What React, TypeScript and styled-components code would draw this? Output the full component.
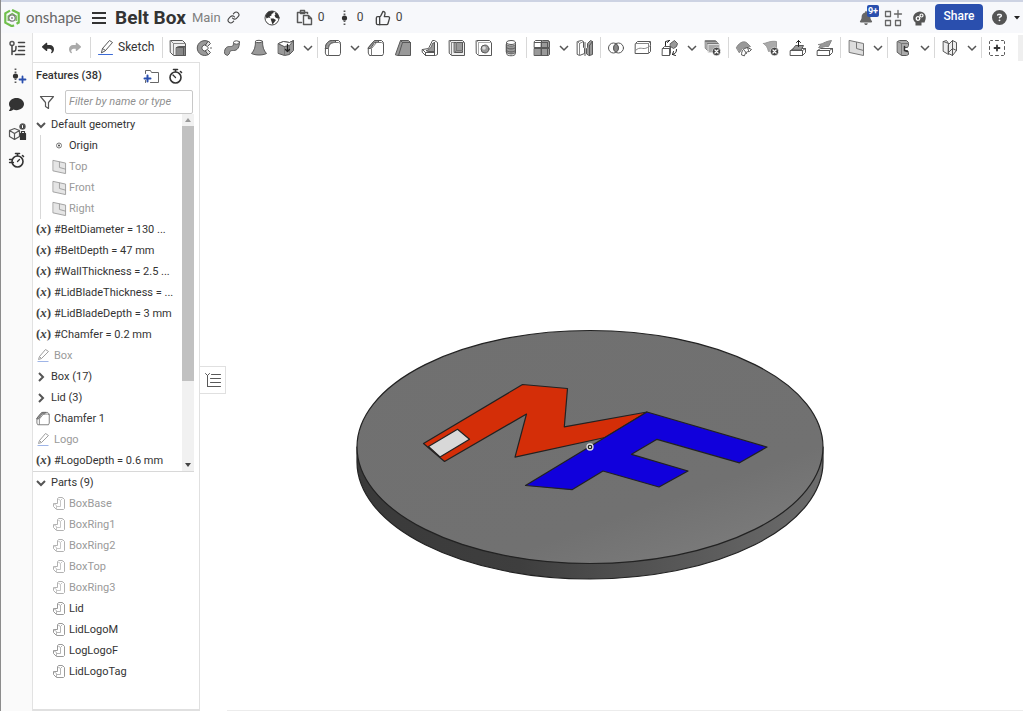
import React from 'react';
import styled, { createGlobalStyle } from 'styled-components';
import { Link, ThumbsUp } from 'lucide-react';
import { FaBell, FaComment, FaCircleQuestion, FaReply, FaShare } from 'react-icons/fa6';

const GlobalStyle = createGlobalStyle`
  * { box-sizing: border-box; }
  html, body, #root { height: 100%; }
  body {
    margin: 0;
    overflow: hidden;
    background: #fff;
    color: #333;
    font-family: Roboto, "Liberation Sans", sans-serif;
    font-size: 11px;
    line-height: 21px;
  }
  button, input { font: inherit; color: inherit; }
  ul { list-style: none; margin: 0; padding: 0; }
  svg { display: block; flex: none; }
`;

const Shell = styled.div`
  height: 100%;
  display: flex;
  flex-direction: column;
  border-left: 1px solid #8c8c8c;
`;

const TopBar = styled.header`
  height: 33px;
  flex: none;
  display: flex;
  align-items: center;
  padding: 0 1px 0 3px;
  background: #f7f8fb;
  border-top: 2px solid #cdd3e3;
  white-space: nowrap;
`;

const Brand = styled.a`
  display: flex;
  align-items: center;
  gap: 6px;
  width: 87px;
  color: #666;
  font-family: Lato, sans-serif;
  font-size: 15px;
  text-decoration: none;
`;

const IconButton = styled.button<{ $w?: number; $color?: string }>`
  width: ${p => p.$w ?? 27}px;
  height: 28px;
  flex: none;
  display: flex;
  align-items: center;
  justify-content: center;
  padding: 0 ${p => (p.$w ? 0 : 1)}px 0 0;
  border: 0;
  background: none;
  color: ${p => p.$color ?? '#444'};
  position: relative;
`;

const DocTitle = styled.h1`
  margin: 0 6px 0 9px;
  font-family: Roboto, sans-serif;
  font-size: 19px;
  font-weight: 700;
  color: #333;
`;

const Workspace = styled.span`
  font-size: 13px;
  color: #808080;
`;

const Stats = styled.div`
  display: flex;
  align-items: center;
  gap: 8px;
  margin-left: 7px;
`;

const StatList = styled.div`
  display: flex;
  align-items: center;
`;

const Stat = styled.button`
  display: flex;
  align-items: center;
  gap: 5px;
  min-width: 39px;
  padding: 0;
  border: 0;
  background: none;
  color: #444;
  font-size: 12px;
`;

const Actions = styled.div`
  display: flex;
  align-items: center;
  margin-left: auto;
`;

const Badge = styled.span`
  position: absolute;
  top: 1px;
  right: 1px;
  padding: 0 1px;
  border-radius: 2px;
  background: #2a4fae;
  color: #fff;
  font-size: 9px;
  font-weight: 700;
  line-height: 12px;
`;

const ShareButton = styled.button`
  width: 48px;
  height: 26px;
  margin: 0 4px 2px 3px;
  padding: 0;
  border: 0;
  border-radius: 4px;
  background: #2a4fae;
  color: #fff;
  font-size: 12px;
  font-weight: 500;
`;

const Body = styled.div`
  flex: 1;
  min-height: 0;
  display: flex;
`;

const Rail = styled.nav`
  width: 32px;
  flex: none;
  display: flex;
  flex-direction: column;
  align-items: center;
  padding-top: 1px;
  background: #fafafa;
  border-right: 1px solid #e2e2e2;
`;

const Main = styled.div`
  flex: 1;
  min-width: 0;
  display: flex;
  flex-direction: column;
`;

const Toolbar = styled.div`
  height: 29px;
  flex: none;
  display: flex;
  align-items: center;
  overflow: hidden;
`;

const Group = styled.div`
  height: 21px;
  display: flex;
  align-items: center;
  flex: none;
  padding: 0 1px 0 2px;
  & + & { border-left: 1px solid #d8d8d8; }
`;

const SketchButton = styled.button`
  width: 68px;
  display: flex;
  align-items: center;
  gap: 4px;
  padding: 0 0 0 5px;
  border: 0;
  background: none;
  font-size: 12px;
`;

const ToolbarEnd = styled.div`
  width: 5px;
  height: 26px;
  flex: none;
  margin-left: auto;
  background: #efefef;
`;

const Work = styled.div`
  flex: 1;
  min-height: 0;
  display: flex;
`;

const Panel = styled.aside`
  width: 167px;
  flex: none;
  display: flex;
  flex-direction: column;
  border: solid #e0e0e0;
  border-width: 1px 1px 2px 0;
`;

const PanelHead = styled.div`
  display: flex;
  align-items: center;
  height: 26px;
  padding: 0 12px 0 3px;
  h2 { margin: 0 auto 0 0; font-size: 11px; line-height: 26px; font-weight: 500; }
`;

const FilterRow = styled.div`
  display: flex;
  align-items: center;
  height: 25px;
  padding: 0 6px 0 1px;
`;

const FilterInput = styled.input`
  flex: 1;
  min-width: 0;
  height: 24px;
  margin-left: 4px;
  padding: 0 3px;
  border: 1px solid #c8c8c8;
  border-radius: 2px;
  &::placeholder { color: #909090; opacity: 1; font-style: italic; }
`;

const FeatureArea = styled.div`
  display: flex;
  flex: none;
  margin-right: 5px;
  border-bottom: 1px solid #d8d8d8;
`;

const FeatureList = styled.ul`
  flex: 1;
  min-width: 0;
`;

const Row = styled.li<{ $muted?: boolean; $deep?: boolean }>`
  height: 21px;
  display: flex;
  align-items: center;
  gap: 3px;
  padding-left: ${p => (p.$deep ? 19 : 3)}px;
  color: ${p => (p.$muted ? '#9a9a9a' : '#333')};
  > svg { opacity: ${p => (p.$muted ? 0.75 : 1)}; }
`;

const RowText = styled.span`
  white-space: nowrap;
`;

const VariableMark = styled.span`
  width: 15px;
  height: 19px;
  flex: none;
  color: #444;
  font-family: "Liberation Serif", serif;
  font-size: 13px;
  font-weight: 700;
  line-height: 17px;
  white-space: nowrap;
`;

const Children = styled.ul`
  margin-left: 7px;
  border-left: 1px solid #d8d8d8;
  li { padding-left: 11px; }
`;

const Toggle = styled.button`
  display: flex;
  align-items: center;
  gap: 5px;
  height: 21px;
  padding: 0 0 0 3px;
  border: 0;
  background: none;
`;

const Scrollbar = styled.div`
  width: 12px;
  flex: none;
  display: flex;
  flex-direction: column;
  align-items: center;
  background: #f1f1f1;
  svg { margin: 4px 0; }
`;

const Thumb = styled.div`
  width: 12px;
  height: 255px;
  background: #c1c1c1;
  & + svg { margin-top: auto; }
`;

const PartsList = styled.ul`
  flex: 1;
`;

const Canvas = styled.main`
  flex: 1;
  min-width: 0;
  position: relative;
  overflow: hidden;
  > svg { width: 100%; height: 100%; }
  &::after {
    content: '';
    position: absolute;
    inset: auto 0 0 27px;
    height: 1px;
    background: #ececec;
  }
`;

const PanelTab = styled.button`
  position: absolute;
  left: -1px;
  top: 304px;
  width: 27px;
  height: 28px;
  display: grid;
  place-items: center;
  padding: 0;
  border: 1px solid #e0e0e0;
  border-left-color: #fff;
  background: #fff;
`;

/* ---------- drawings ---------- */

const Art = styled.svg`
  overflow: visible;
`;

const S = ({ children, size = 16, sw = 1 }: { children: React.ReactNode; size?: number; sw?: number }) => (
  <Art width={size} height={size} viewBox="-0.5 -0.5 16 16" fill="none" stroke="#585858" strokeWidth={sw} strokeLinejoin="round" strokeLinecap="round">
    {children}
  </Art>
);
const G = '#999';

const Chevron = ({ right, bold }: { right?: boolean; bold?: boolean }) => (
  <svg width="10" height="10" viewBox="0 0 10 10" fill="none" stroke="#555" strokeWidth={bold ? 2 : 1.5}>
    <path d={right ? 'M3 1l4 4-4 4' : 'M1 3l4 4 4-4'} />
  </svg>
);

const Pencil = () => (
  <S>
    <path d="M3 12l1-4 7-8 3 2-7 8zM4 8l3 2" />
    <path d="M0 14h14" stroke="#3c6bd6" />
  </S>
);
const PencilRow = () => (
  <Art width="15" height="14" viewBox="-0.5 -0.5 15 14" fill="none" stroke="#808080" strokeLinejoin="round">
    <path d="M2 10l1-3 6-7 3 2-7 7zM3 7l2 2" />
    <path d="M1 12h11" stroke="#7f9de0" />
  </Art>
);

const ChamferShape = () => (
  <>
    <path d="M0 7l5-6 2-1h6l2 2v11l-1 2H1l-1-2z" fill="#fff" />
    <path d="M0 7l6-7h5L9 2H6L2 8H0z" fill={G} />
    <path d="M3 15V8l5-6h5l2 1" stroke="#777" />
  </>
);
const Chamfer = ({ small }: { small?: boolean }) => (
  small
    ? <Art width="15" height="14" viewBox="-0.5 -0.5 17 17" fill="none" stroke="#666" strokeLinejoin="round"><ChamferShape /></Art>
    : <S><ChamferShape /></S>
);

const solidTools: React.ReactNode[] = [
  <S><path d="M0 0h12l3 3v12H3l-3-3z" fill="#eee" /><path d="M0 0l3 3h12M3 3v12" stroke="#888" /><path d="M6 7l2-1h7v9H6z" fill="#888" /><path d="M6 7h7v8M13 7l2-1" /></S>,
  <S><path d="M11 1a7.500 7.500 0 1 0 0 13l1-1-3-3a3 3 0 1 1 0-5l3-3z" fill={G} /><path d="M11 1l2 2-3 3-2-1zM11 14l2-2-3-3-2 1z" fill="#ddd" /><path d="M10 7.500h1M13 7.500h1" /></S>,
  <S><path d="M0 12c0-4 2-6 5-6 3 0 4 0 4-4l6-1c0 6-2 9-6 9-2 0-4 0-4 3l-2 2-2-1z" fill={G} /><ellipse cx="12" cy="2" rx="3" ry="1.700" fill="#fff" /></S>,
  <S><path d="M4 1c0 5-1 9-4 12 4 2 11 2 15 0-3-3-4-7-4-12z" fill={G} /><ellipse cx="7.500" cy="1" rx="3.500" ry="1.200" fill="#fff" /></S>,
  <S><path d="M0 3l5-2 6 1 4-2v10l-4 4-5 1-6-2z" fill={G} /><path d="M0 3l5-2 6 1 4-2-4 5-5 1z" fill="#fff" /><path d="M6 6v9M11 5v9" stroke="#777" /><path d="M9 4v7M7 9l2 2 2-2" stroke="#222" strokeWidth="1.300" /></S>,
];

const editTools: React.ReactNode[] = [
  <S><path d="M0 7c0-4 3-7 7-7h6l2 2v11l-1 2H1l-1-2z" fill="#fff" /><path d="M0 7c0-4 3-7 7-7h4L9 2C5 2 3 4 3 8H0z" fill={G} /><path d="M3 15V8c0-3 2-6 6-6h4l2 1" stroke="#777" /></S>,
  <Chamfer />,
  <S><path d="M0 14L5 0h8l2 2v13H3z" fill={G} /><path d="M5 0l2 2h8M7 2L3 15" /></S>,
  <S><path d="M0 9l6-1 4-8h2l3 2v12l-2 1H3l-3-3z" fill="#fff" /><path d="M4 10c4-1 5-4 6-7l2-1v9H6z" fill={G} /><path d="M0 9l3 3h9V2M3 12v3M12 12v3" /></S>,
  <S><path d="M0 0h13l2 2v13H2l-2-2z" fill="#eee" /><path d="M0 0l2 2h13M2 2v13" stroke="#888" /><path d="M5 2h8v10H5z" fill={G} /><path d="M5 12l2-2h6M7 2v8" stroke="#777" /></S>,
  <S><path d="M0 0h13l2 2v13H2l-2-2z" fill="#fff" /><path d="M0 0l2 2h13M2 2v13" stroke="#aaa" /><circle cx="8.500" cy="8.500" r="4" fill={G} /><circle cx="7.500" cy="7.500" r="1.800" fill="#ddd" stroke="none" /></S>,
  <S><path d="M3 2v11c0 3 9 3 9 0V2" fill="#fff" /><path d="M3 4c2 2 7 2 9 0v8c-2 2-7 2-9 0z" fill={G} /><ellipse cx="7.500" cy="2" rx="4.500" ry="2" fill="#fff" /><path d="M3 7c2 2 7 2 9 0M3 10c2 2 7 2 9 0" /></S>,
];

const patternIcon = <S><path d="M0 1l1-1h6v7H0z" fill="#fff" /><path d="M7 1l1-1h6l1 1v6H7zM0 8h7v7H0zM7 8h8v6l-1 1H7z" fill={G} /><path d="M0 2h13M13 2v13M13 2l1-1M7 0v15M0 7.500h15" /></S>;
const mirrorIcon = <S><path d="M0 1l4-1 2 1v6l1 1v5l-5 2-2-1z" fill="#fff" /><path d="M2 3v12M0 1l2 2 4-2" stroke="#888" /><path d="M9 13V8l1-1V3l3-3 2 1v13l-3 1z" fill={G} /><path d="M12 5v10M12 5l3-4M7.500 2v13" /></S>;

const booleanTools: React.ReactNode[] = [
  <S><circle cx="5" cy="7.500" r="5" /><circle cx="10" cy="7.500" r="5" /><path d="M7.500 3.200a5 5 0 0 1 0 8.600 5 5 0 0 1 0-8.600z" fill="#888" /></S>,
  <S><path d="M0 3l2-2h13v10l-2 2H0z" fill="#fff" /><path d="M0 3h13l2-2M13 3v10" stroke="#888" /><path d="M0 10c5-5 7 0 12-3l3-2" stroke="#888" /></S>,
  <S><path d="M0 8l2-2h6v7l-1 2H0z" fill="#fff" /><path d="M0 8h7v7M7 8l1-2" /><path d="M8 3l4-3 3 3-1 3-3 2-3-2z" fill={G} /><path d="M3 5V1l4-1M7 0L5 2M14 9c0 3-1 4-4 5M10 14l1-3M10 14l3 1" stroke="#222" /></S>,
];
const deletePart = <S><path d="M0 0h10l2 2v8H2L0 8z" fill="#aaa" stroke="#888" /><path d="M0 1h11M2 3h11v7" stroke="#777" /><path d="M3 4h11v8H3z" fill="#aaa" stroke="#ddd" /><circle cx="11" cy="11" r="4.200" fill="#444" stroke="#fff" strokeWidth=".6" /><path d="M9.500 9.500l3 3M12.500 9.500l-3 3" stroke="#fff" strokeWidth="1.300" /></S>;

const faceTools: React.ReactNode[] = [
  <S><path d="M0 7C2 3 6 0 10 2l4 4-3 1-5 1-3 4z" fill={G} stroke="#888" /><path d="M5 14c0-4 2-6 6-7l4 2-2 2c-3 0-4 1-5 4zM8 10l2 3M11 7l1 3" fill="#fff" /></S>,
  <S><path d="M0 3c3 0 6-3 13-2v8L5 11C4 7 3 5 0 3z" fill="#aaa" stroke="#999" /><circle cx="11" cy="11" r="4.200" fill="#444" stroke="#fff" strokeWidth=".6" /><path d="M9.500 9.500l3 3M12.500 9.500l-3 3" stroke="#fff" strokeWidth="1.300" /></S>,
  <S><path d="M0 10l3-2h12v4l-3 3H0z" fill="#fff" /><path d="M0 10h12v5M12 10l3-2" /><path d="M2 9l3-4h8l-2 4z" fill={G} /><path d="M8 6V0M6 2l2-2 2 2" stroke="#222" /></S>,
  <S><path d="M0 10l3-2h12v4l-3 3H0z" fill="#fff" /><path d="M0 10h12v5M12 10l3-2" /><path d="M1 4c4 0 6-3 13-4l-3 6c-4-1-6 2-10 1l2-2z" fill={G} stroke="#888" /></S>,
];

const Plane = ({ size = 16 }: { size?: number }) => (
  <S size={size}><path d="M1 0l14 3v12L1 12z" fill="#ddd" stroke="#777" /><path d="M8 2v6l7 2" stroke="#777" /></S>
);
const frameIcon = <S><path d="M2 1l2-1h7l2 2v3l-1 2h-3v3h3l1 2v2l-2 1H6l-4-3z" fill="#aaa" /><path d="M2 1l4 2h7M6 3v12" stroke="#777" /><path d="M9 6v4l3 1" stroke="#333" strokeWidth="1.500" /></S>;
const sheetIcon = <S><path d="M1 1l5 2v11l-5-3zM6 4l4-4 4 2v8l-4 5-4-2z" fill="#eee" /><path d="M1 1l3-1 2 3M10 0v8l4 2M6 12l4-4M10 8v7" /></S>;
const addIcon = <S><path d="M0 3V1l1-1h2M12 0h2l1 1v2M15 12v2l-1 1h-2M3 15H1l-1-1v-2M6 0h3M6 15h3M0 6v3M15 6v3" /><path d="M7.500 5v5M5 7.500h5" strokeWidth="1.800" stroke="#333" /></S>;

const PartIcon = () => (
  <Art width="14" height="14" viewBox="-0.5 -0.500 14 14" fill="#fff" stroke="#999" strokeLinejoin="round">
    <path d="M1 6h4V1l1-1h4l2 2v9l-1 1H4L1 9z" />
    <path d="M1 6l3 2v4M4 9h4V3M5 1l3 2 2-2" fill="none" stroke="#b5b5b5" />
  </Art>
);

const Variable = () => <VariableMark>(<i>x</i>)</VariableMark>;

const Stopwatch = ({ fast }: { fast?: boolean }) => (
  <S sw={1.600}>
    <circle cx="8" cy="9" r="5.500" stroke="#333" />
    <path d="M6 1h4M8 1v2M13 3l1 1" stroke="#333" />
    <path d={fast ? 'M8 9l2-2M0 7h3M0 10h4' : 'M8 9L5.500 6.500'} stroke="#333" strokeWidth="1.300" />
  </S>
);

const VersionDot = ({ plus }: { plus?: boolean }) => (
  <S>
    <circle cx={plus ? 6 : 8} cy="7.500" r="2.600" fill="#333" stroke="none" />
    <path d={plus ? 'M6 0v5M6 10v5' : 'M8 0v5M8 10v5'} strokeDasharray="1.500 1.500" strokeWidth="1.800" strokeLinecap="butt" />
    {plus && <path d="M13 8v6M10 11h6" stroke="#2a4fae" strokeWidth="1.800" />}
  </S>
);

const Logo = () => (
  <svg width="16" height="18" viewBox="0 0 16 18" fill="none">
    <path d="M6 1.600L1.300 4.300v9.400L8 17.300l2-1.100M12.500 14.700l2.200-1.200V4.300L8 .9" stroke="#6fbf4b" strokeWidth="2.200" />
    <path d="M4.200 12V7l4-2.500 4 2.500v5" stroke="#6fbf4b" strokeWidth="1.300" />
    <circle cx="8" cy="9" r="3.200" stroke="#777" strokeWidth="1.200" />
    <circle cx="8" cy="9" r="1" fill="#888" />
  </svg>
);

const Globe = () => (
  <S>
    <circle cx="7.500" cy="7.500" r="7" fill="#fff" stroke="#444" />
    <path d="M1 5l3-4 5-.500 0 2-2 1 0 1.500-2 1 1 1.500-2-.500L2 8zM6 8l3 0 2.500 1.500-1.500 2-2 2.500-1-3zM10 2l3 1 2 4-2 1-2-1-1-2 1-1z" fill="#333" stroke="none" />
  </S>
);

const Lid = () => (
  <svg viewBox="200 62 823 649" preserveAspectRatio="xMidYMid meet">
    <defs>
      <linearGradient id="rim">
        <stop offset="0" stopColor="#3a3a3a" />
        <stop offset=".35" stopColor="#3e3e3e" />
        <stop offset=".55" stopColor="#4e4e4e" />
        <stop offset="1" stopColor="#6c6c6c" />
      </linearGradient>
      <linearGradient id="face" x1="0" y1="0" x2=".7" y2="1">
        <stop offset="0" stopColor="#707070" />
        <stop offset=".8" stopColor="#717171" />
        <stop offset="1" stopColor="#7a7a7a" />
      </linearGradient>
    </defs>
    <g stroke="#222" strokeWidth="1.200" strokeLinejoin="round">
      <path d="M357 447v15a233 117 0 0 0 466 0v-15z" fill="url(#rim)" />
      <ellipse cx="590" cy="447" rx="233" ry="116.500" fill="url(#face)" />
      <path d="M423.500 443.500L522.500 384.500l45 4-3.200 38.300L647 412l-42 25.500-90 19.700 11.500-43.200-82 47.500z" fill="#d42e08" />
      <path d="M428.500 446.500l29-17.200 12 10-29.500 17.700z" fill="#d8d8d8" />
      <path d="M647 412l120 35-27.500 15.800L657 439.300l-25.500 15L688 471l-29 16-56-16-31 18.700-46.500-4.200z" fill="#1100dc" />
    </g>
    <circle cx="590" cy="447" r="3" fill="#222" stroke="#ddd" strokeWidth="1.300" />
    <circle cx="590" cy="447" r="1" fill="#fff" />
  </svg>
);

/* ---------- pieces ---------- */

const Tool = ({ label, children }: { label: string; children: React.ReactNode }) => (
  <IconButton aria-label={label}>{children}</IconButton>
);
const More = ({ label }: { label: string }) => (
  <IconButton $w={16} aria-label={label}><Chevron /></IconButton>
);

type Feature = { kind: 'var' | 'sketch' | 'folder' | 'chamfer'; text: string };
const features: Feature[] = [
  { kind: 'var', text: '#BeltDiameter = 130 ...' },
  { kind: 'var', text: '#BeltDepth = 47 mm' },
  { kind: 'var', text: '#WallThickness = 2.5 ...' },
  { kind: 'var', text: '#LidBladeThickness = ...' },
  { kind: 'var', text: '#LidBladeDepth = 3 mm' },
  { kind: 'var', text: '#Chamfer = 0.2 mm' },
  { kind: 'sketch', text: 'Box' },
  { kind: 'folder', text: 'Box (17)' },
  { kind: 'folder', text: 'Lid (3)' },
  { kind: 'chamfer', text: 'Chamfer 1' },
  { kind: 'sketch', text: 'Logo' },
  { kind: 'var', text: '#LogoDepth = 0.6 mm' },
];
const parts = ['BoxBase', 'BoxRing1', 'BoxRing2', 'BoxTop', 'BoxRing3', 'Lid', 'LidLogoM', 'LogLogoF', 'LidLogoTag'];

const FeatureRow = ({ kind, text }: Feature) =>
  kind === 'folder' ? (
    <li><Toggle aria-expanded={false}><Chevron right bold />{text}</Toggle></li>
  ) : (
    <Row $muted={kind === 'sketch'}>
      {kind === 'var' ? <Variable /> : kind === 'sketch' ? <PencilRow /> : <Chamfer small />}
      <RowText>{text}</RowText>
    </Row>
  );

export default function App() {
  return (
    <Shell>
      <GlobalStyle />
      <TopBar>
        <Brand href="#"><Logo />onshape</Brand>
        <IconButton $w={15} aria-label="Menu">
          <svg width="14" height="14" viewBox="0 0 14 14" stroke="#333" strokeWidth="2"><path d="M0 2h14M0 7h14M0 12h14" /></svg>
        </IconButton>
        <DocTitle>Belt Box</DocTitle>
        <Workspace>Main</Workspace>
        <IconButton aria-label="Copy link"><Link size={13} /></IconButton>
        <Stats>
          <IconButton $w={34} aria-label="Public document"><Globe /></IconButton>
          <StatList>
            <Stat aria-label="Copies">
              <S><path d="M4 12H0V2h10v1M3 0h4v3H3z" strokeWidth="1.500" /><path d="M6 5h5l3 3v6H6zM11 5v3h3" strokeWidth="1.400" /></S>0
            </Stat>
            <Stat aria-label="Versions"><VersionDot />0</Stat>
            <Stat aria-label="Likes"><ThumbsUp size={16} strokeWidth={2} />0</Stat>
          </StatList>
        </Stats>
        <Actions>
          <IconButton $w={28} $color="#666" aria-label="Notifications"><FaBell size={14} /><Badge>9+</Badge></IconButton>
          <IconButton $w={26} aria-label="App store">
            <S sw={1.300}><path d="M0 1h5v5H0zM0 10h5v5H0zM10 10h5v5h-5zM12.500 0v7M9 3.500h7" stroke="#666" /></S>
          </IconButton>
          <IconButton $w={26} aria-label="Learning center">
            <S>
              <path d="M4 15v-3C0 9 1 2 8 1c5 0 7 4 6 8l-1 3h-3v3z" fill="#555" stroke="none" />
              <circle cx="6.500" cy="8" r="1.800" stroke="#fff" strokeWidth="1.300" /><circle cx="10" cy="5" r="1.500" stroke="#fff" strokeWidth="1.200" />
            </S>
          </IconButton>
          <ShareButton>Share</ShareButton>
          <IconButton $w={24} $color="#555" aria-label="Help"><FaCircleQuestion size={15} /></IconButton>
          <IconButton $w={11} aria-label="Help menu">
            <svg width="6" height="4" viewBox="0 0 6 4"><path d="M0 0h6L3 3.500z" fill="#222" /></svg>
          </IconButton>
        </Actions>
      </TopBar>
      <Body>
        <Rail>
          <IconButton $w={28} aria-label="Feature tree">
            <S sw={1.500}><circle cx="2.500" cy="3" r="2" /><path d="M2.500 5v9M2.500 11c4 0 4-1 4-5M9 2h6M9 6h6M9 10h6M6 14h9" stroke="#444" /></S>
          </IconButton>
          <IconButton $w={28} aria-label="Insert version"><VersionDot plus /></IconButton>
          <IconButton $w={28} $color="#333" aria-label="Comments"><FaComment size={15} /></IconButton>
          <IconButton $w={28} aria-label="Configurations">
            <S sw={1.200}><path d="M0 6l5-2 5 2v6l-5 3-5-3zM0 6l5 3 5-3M5 9v6" /><circle cx="13" cy="2" r="2.600" fill="#333" /><path d="M11 9h5v6h-5z" fill="#333" stroke="#333" /><path d="M12 9V7h3v2" stroke="#333" /><path d="M13 1v2" stroke="#fff" /></S>
          </IconButton>
          <IconButton $w={28} aria-label="Performance"><Stopwatch fast /></IconButton>
        </Rail>
        <Main>
          <Toolbar>
            <Group>
              <IconButton $color="#333" aria-label="Undo"><FaReply size={12} /></IconButton>
              <IconButton $color="#aaa" aria-label="Redo"><FaShare size={12} /></IconButton>
            </Group>
            <Group><SketchButton><Pencil />Sketch</SketchButton></Group>
            <Group>
              {solidTools.map((t, i) => <Tool key={i} label={['Extrude', 'Revolve', 'Sweep', 'Loft', 'Thicken'][i]}>{t}</Tool>)}
              <More label="More solid tools" />
            </Group>
            <Group>
              <Tool label="Fillet">{editTools[0]}</Tool>
              <More label="More fillets" />
              {editTools.slice(1).map((t, i) => <Tool key={i} label={['Chamfer', 'Draft', 'Rib', 'Shell', 'Hole', 'Thread'][i]}>{t}</Tool>)}
            </Group>
            <Group>
              <Tool label="Pattern">{patternIcon}</Tool>
              <More label="More patterns" />
              <Tool label="Mirror">{mirrorIcon}</Tool>
            </Group>
            <Group>
              {booleanTools.map((t, i) => <Tool key={i} label={['Boolean', 'Split', 'Transform'][i]}>{t}</Tool>)}
              <More label="More transforms" />
              <Tool label="Delete part">{deletePart}</Tool>
            </Group>
            <Group>
              {faceTools.map((t, i) => <Tool key={i} label={['Modify fillet', 'Delete face', 'Move face', 'Replace face'][i]}>{t}</Tool>)}
            </Group>
            <Group><Tool label="Plane"><Plane /></Tool><More label="More planes" /></Group>
            <Group><Tool label="Frame">{frameIcon}</Tool><More label="More frames" /></Group>
            <Group><Tool label="Sheet metal">{sheetIcon}</Tool><More label="More sheet metal" /></Group>
            <Group><Tool label="Add custom feature">{addIcon}</Tool></Group>
            <ToolbarEnd />
          </Toolbar>
          <Work>
            <Panel>
              <PanelHead>
                <h2>Features (38)</h2>
                <IconButton $w={24} aria-label="Add folder">
                  <S><path d="M2 5V2h5l1 2h7v10H7M2 12v2" stroke="#666" /><path d="M4 7v6M1 10h6" stroke="#2a4fae" strokeWidth="2" /></S>
                </IconButton>
                <IconButton $w={24} aria-label="Rebuild times"><Stopwatch /></IconButton>
              </PanelHead>
              <FilterRow>
                <IconButton aria-label="Filter options">
                  <S sw={1.200}><path d="M1 2h13L9 8v6l-3-2V8z" /></S>
                </IconButton>
                <FilterInput aria-label="Filter features" placeholder="Filter by name or type" />
              </FilterRow>
              <FeatureArea>
                <FeatureList>
                  <li>
                    <Toggle aria-expanded><Chevron bold />Default geometry</Toggle>
                    <Children>
                      <Row>
                        <svg width="14" height="14" viewBox="0 0 14 14" fill="none" stroke="#777"><circle cx="7" cy="6.500" r="2.500" /><circle cx="7" cy="6.500" r="1" fill="#444" stroke="none" /></svg>
                        <RowText>Origin</RowText>
                      </Row>
                      {['Top', 'Front', 'Right'].map(t => <Row key={t} $muted><Plane size={14} /><RowText>{t}</RowText></Row>)}
                    </Children>
                  </li>
                  {features.map(f => <FeatureRow key={f.text} {...f} />)}
                </FeatureList>
                <Scrollbar>
                  <svg width="6" height="4" viewBox="0 0 6 4"><path d="M0 4h6L3 0z" fill="#999" /></svg>
                  <Thumb />
                  <svg width="6" height="4" viewBox="0 0 6 4"><path d="M0 0h6L3 4z" fill="#444" /></svg>
                </Scrollbar>
              </FeatureArea>
              <PartsList>
                <li><Toggle aria-expanded><Chevron bold />Parts (9)</Toggle></li>
                {parts.map((p, i) => <Row key={p} $deep $muted={i < 5}><PartIcon /><RowText>{p}</RowText></Row>)}
              </PartsList>
            </Panel>
            <Canvas>
              <Lid />
              <PanelTab aria-label="Show tables">
                <S><path d="M0 1l2 2 2-2M2 3v11M6 2h9M5 6h10M5 10h10M2 14h13" /></S>
              </PanelTab>
            </Canvas>
          </Work>
        </Main>
      </Body>
    </Shell>
  );
}
